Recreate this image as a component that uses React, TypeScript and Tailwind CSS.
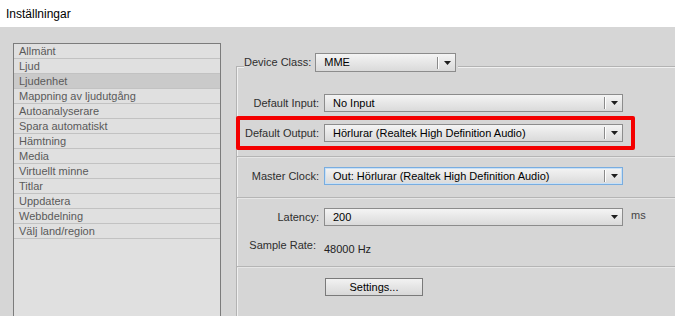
import React from "react";

const items = [
  "Allmänt",
  "Ljud",
  "Ljudenhet",
  "Mappning av ljudutgång",
  "Autoanalyserare",
  "Spara automatiskt",
  "Hämtning",
  "Media",
  "Virtuellt minne",
  "Titlar",
  "Uppdatera",
  "Webbdelning",
  "Välj land/region",
];

function Arrow() {
  return (
    <svg width="7" height="4" viewBox="0 0 7 4">
      <path d="M0 0h7L3.5 4z" fill="#1e1e1e" />
    </svg>
  );
}

function Select({
  value,
  width,
  sep = true,
  focus = false,
  tall = false,
}: {
  value: string;
  width: string;
  sep?: boolean;
  focus?: boolean;
  tall?: boolean;
}) {
  return (
    <div
      className={`flex items-center ${tall ? "h-[19px]" : "h-[18px]"} ${width} border ${
        focus ? "border-[#79ade0] shadow-[inset_0_0_0_1px_#c7e0f6]" : "border-[#8c8c8c]"
      } bg-gradient-to-b from-[#f4f4f4] to-[#dadada]`}
    >
      <span className="flex-1 pl-[8px] text-[11px] leading-none text-black whitespace-nowrap">{value}</span>
      {sep && <span className="w-[2px] h-[12px] border-l border-[#8a8a8a] border-r border-r-white" />}
      <span className="w-[16px] flex justify-center">
        <Arrow />
      </span>
    </div>
  );
}

function Divider() {
  return <div className="h-[2px] border-t border-[#b5b5b5] border-b border-b-[#e6e6e6]" />;
}

function Row({ label, children }: { label: string; children: React.ReactNode }) {
  return (
    <div className="flex items-center">
      <span className="w-[83px] pr-[1px] text-right text-[11px] text-[#2e2e2e] whitespace-nowrap">{label}</span>
      <div className="ml-[4px]">{children}</div>
    </div>
  );
}

export default function App() {
  return (
    <div className="w-[675px] h-[316px] overflow-hidden flex flex-col bg-[#d6d6d6] font-['Liberation_Sans',Arial,sans-serif]">
      <div className="h-[27px] shrink-0 bg-white flex items-center pl-[6px] text-[12px] text-black">
        Inställningar
      </div>
      <div className="flex-1 flex items-start">
        {/* vänster lista */}
        <div className="ml-[13px] mt-[16px] w-[208px] h-[320px] border border-[#7c7c7c] bg-[#e0e0e0]">
          {items.map((it) => (
            <div
              key={it}
              className={`h-[15px] flex items-center pl-[5px] border-b border-[#c2c2c2] text-[11px] text-[#5a5a5a] ${
                it === "Ljudenhet" ? "bg-[#cacaca]" : "bg-[#e0e0e0]"
              }`}
            >
              {it}
            </div>
          ))}
        </div>

        {/* inställningsgrupp */}
        <div className="ml-[15px] mt-[39px] flex-1 h-[300px] border-t border-l border-[#b3b3b3] shadow-[inset_1px_1px_0_#f0f0f0] flex flex-col">
          <div className="-mt-[14px] ml-[7px] self-start flex items-center bg-[#d6d6d6] pr-[2px]">
            <span className="text-[11px] text-[#2e2e2e] pr-[4px]">Device Class:</span>
            <Select value="MME" width="w-[141px]" tall />
          </div>

          <div className="mt-[22px]">
            <Row label="Default Input:">
              <Select value="No Input" width="w-[299px]" />
            </Row>
          </div>

          <div className="mt-[12px] relative">
            <Row label="Default Output:">
              <Select value="Hörlurar (Realtek High Definition Audio)" width="w-[299px]" />
            </Row>
            <div className="absolute -left-[1px] -top-[8px] w-[399px] h-[34px] border-[4px] border-[#f40000] rounded-[2px]" />
          </div>

          <div className="mt-[14px]">
            <Divider />
          </div>

          <div className="mt-[9px]">
            <Row label="Master Clock:">
              <Select value="Out: Hörlurar (Realtek High Definition Audio)" width="w-[299px]" focus />
            </Row>
          </div>

          <div className="mt-[12px]">
            <Divider />
          </div>

          <div className="mt-[9px] flex items-start">
            <Row label="Latency:">
              <Select value="200" width="w-[299px]" sep={false} />
            </Row>
            <span className="ml-[8px] -mt-[1px] text-[11px] text-[#444]">ms</span>
          </div>

          <div className="mt-[11px] flex items-start">
            <span className="w-[83px] pr-[4px] text-right text-[11px] text-[#2e2e2e] whitespace-nowrap">Sample Rate:</span>
            <span className="ml-[4px] mt-[4px] text-[11px] text-[#222]">48000 Hz</span>
          </div>

          <div className="mt-[8px]">
            <Divider />
          </div>

          <div className="mt-[6px] ml-[88px]">
            <button className="w-[98px] h-[18px] border border-[#7a7a7a] bg-gradient-to-b from-[#f2f2f2] to-[#d8d8d8] text-[11px] leading-none text-black">
              Settings...
            </button>
          </div>
        </div>
      </div>
    </div>
  );
}
